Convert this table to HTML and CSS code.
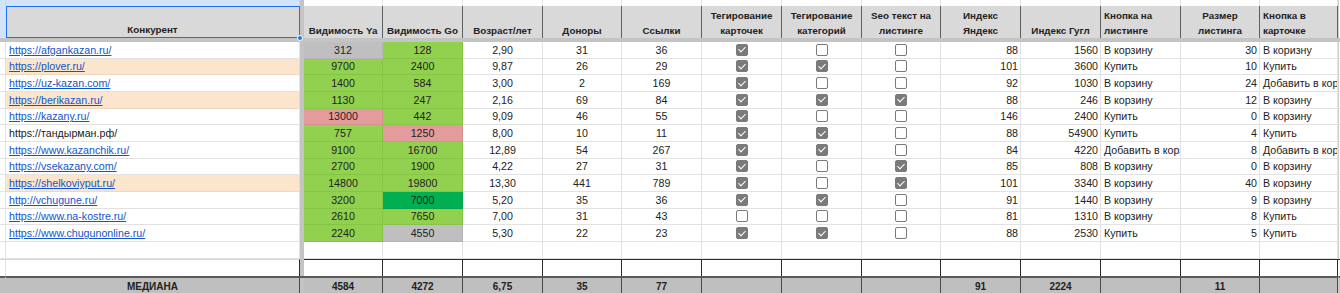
FILE: index.html
```html
<!DOCTYPE html>
<html lang="ru">
<head>
<meta charset="utf-8">
<title>Конкуренты</title>
<link rel="stylesheet" href="styles.css">
</head>
<body>
<div class="sheet">
  <div class="row band">
    <div class="c sel"></div><div class="c sel"></div><div class="gut"></div>
    <div class="c"></div><div class="c"></div><div class="c"></div><div class="c"></div><div class="c"></div><div class="c"></div><div class="c"></div><div class="c"></div><div class="c"></div><div class="c"></div><div class="c"></div><div class="c"></div><div class="c"></div><div class="c end"></div>
  </div>
  <div class="row head">
    <div class="h rhsel"></div>
    <div class="h hc selected">Конкурент<span class="dot"></span></div>
    <div class="gut"></div>
    <div class="h hc">Видимость Ya</div>
    <div class="h hc">Видимость Go</div>
    <div class="h hc">Возраст/лет</div>
    <div class="h hc">Доноры</div>
    <div class="h hc">Ссылки</div>
    <div class="h hc">Тегирование<br>карточек</div>
    <div class="h hc">Тегирование<br>категорий</div>
    <div class="h hc">Seo текст на<br>листинге</div>
    <div class="h hc">Индекс<br>Яндекс</div>
    <div class="h hc">Индекс Гугл</div>
    <div class="h hl">Кнопка на<br>листинге</div>
    <div class="h hc">Размер<br>листинга</div>
    <div class="h hl">Кнопка в<br>карточке</div>
    <div class="h end"></div>
  </div>
  <div class="freeze"></div>

  <div class="row data">
    <div class="c rh"></div><div class="c t"><a href="#">https://afgankazan.ru/</a></div><div class="gut"></div>
    <div class="c n gy">312</div><div class="c n g">128</div><div class="c n">2,90</div><div class="c n">31</div><div class="c n">36</div>
    <div class="c n"><span class="cb on"></span></div><div class="c n"><span class="cb"></span></div><div class="c n"><span class="cb"></span></div>
    <div class="c r">88</div><div class="c r">1560</div><div class="c t">В корзину</div><div class="c r">30</div><div class="c t">В коризну</div><div class="c end"></div>
  </div>
  <div class="row data">
    <div class="c rh"></div><div class="c t pe"><a href="#">https://plover.ru/</a></div><div class="gut"></div>
    <div class="c n g">9700</div><div class="c n g">2400</div><div class="c n">9,87</div><div class="c n">26</div><div class="c n">29</div>
    <div class="c n"><span class="cb on"></span></div><div class="c n"><span class="cb on"></span></div><div class="c n"><span class="cb"></span></div>
    <div class="c r">101</div><div class="c r">3600</div><div class="c t">Купить</div><div class="c r">10</div><div class="c t">Купить</div><div class="c end"></div>
  </div>
  <div class="row data">
    <div class="c rh"></div><div class="c t"><a href="#">https://uz-kazan.com/</a></div><div class="gut"></div>
    <div class="c n g">1400</div><div class="c n g">584</div><div class="c n">3,00</div><div class="c n">2</div><div class="c n">169</div>
    <div class="c n"><span class="cb on"></span></div><div class="c n"><span class="cb"></span></div><div class="c n"><span class="cb"></span></div>
    <div class="c r">92</div><div class="c r">1030</div><div class="c t">В корзину</div><div class="c r">24</div><div class="c t">Добавить в корзину</div><div class="c end"></div>
  </div>
  <div class="row data">
    <div class="c rh"></div><div class="c t pe"><a href="#">https://berikazan.ru/</a></div><div class="gut"></div>
    <div class="c n g">1130</div><div class="c n g">247</div><div class="c n">2,16</div><div class="c n">69</div><div class="c n">84</div>
    <div class="c n"><span class="cb on"></span></div><div class="c n"><span class="cb on"></span></div><div class="c n"><span class="cb on"></span></div>
    <div class="c r">88</div><div class="c r">246</div><div class="c t">В корзину</div><div class="c r">12</div><div class="c t">В корзину</div><div class="c end"></div>
  </div>
  <div class="row data">
    <div class="c rh"></div><div class="c t"><a href="#">https://kazany.ru/</a></div><div class="gut"></div>
    <div class="c n pk">13000</div><div class="c n g">442</div><div class="c n">9,09</div><div class="c n">46</div><div class="c n">55</div>
    <div class="c n"><span class="cb on"></span></div><div class="c n"><span class="cb"></span></div><div class="c n"><span class="cb"></span></div>
    <div class="c r">146</div><div class="c r">2400</div><div class="c t">Купить</div><div class="c r">0</div><div class="c t">В корзину</div><div class="c end"></div>
  </div>
  <div class="row data">
    <div class="c rh"></div><div class="c t">https://тандырман.рф/</div><div class="gut"></div>
    <div class="c n g">757</div><div class="c n pk">1250</div><div class="c n">8,00</div><div class="c n">10</div><div class="c n">11</div>
    <div class="c n"><span class="cb on"></span></div><div class="c n"><span class="cb on"></span></div><div class="c n"><span class="cb"></span></div>
    <div class="c r">88</div><div class="c r">54900</div><div class="c t">Купить</div><div class="c r">4</div><div class="c t">Купить</div><div class="c end"></div>
  </div>
  <div class="row data">
    <div class="c rh"></div><div class="c t"><a href="#">https://www.kazanchik.ru/</a></div><div class="gut"></div>
    <div class="c n g">9100</div><div class="c n g">16700</div><div class="c n">12,89</div><div class="c n">54</div><div class="c n">267</div>
    <div class="c n"><span class="cb on"></span></div><div class="c n"><span class="cb on"></span></div><div class="c n"><span class="cb"></span></div>
    <div class="c r">84</div><div class="c r">4220</div><div class="c t">Добавить в корзину</div><div class="c r">8</div><div class="c t">Добавить в корзину</div><div class="c end"></div>
  </div>
  <div class="row data">
    <div class="c rh"></div><div class="c t"><a href="#">https://vsekazany.com/</a></div><div class="gut"></div>
    <div class="c n g">2700</div><div class="c n g">1900</div><div class="c n">4,22</div><div class="c n">27</div><div class="c n">31</div>
    <div class="c n"><span class="cb on"></span></div><div class="c n"><span class="cb"></span></div><div class="c n"><span class="cb on"></span></div>
    <div class="c r">85</div><div class="c r">808</div><div class="c t">В корзину</div><div class="c r">0</div><div class="c t">В корзину</div><div class="c end"></div>
  </div>
  <div class="row data">
    <div class="c rh"></div><div class="c t pe"><a href="#">https://shelkoviyput.ru/</a></div><div class="gut"></div>
    <div class="c n g">14800</div><div class="c n g">19800</div><div class="c n">13,30</div><div class="c n">441</div><div class="c n">789</div>
    <div class="c n"><span class="cb on"></span></div><div class="c n"><span class="cb"></span></div><div class="c n"><span class="cb on"></span></div>
    <div class="c r">101</div><div class="c r">3340</div><div class="c t">В корзину</div><div class="c r">40</div><div class="c t">В корзину</div><div class="c end"></div>
  </div>
  <div class="row data">
    <div class="c rh"></div><div class="c t"><a href="#">http://vchugune.ru/</a></div><div class="gut"></div>
    <div class="c n g">3200</div><div class="c n dg">7000</div><div class="c n">5,20</div><div class="c n">35</div><div class="c n">36</div>
    <div class="c n"><span class="cb on"></span></div><div class="c n"><span class="cb on"></span></div><div class="c n"><span class="cb"></span></div>
    <div class="c r">91</div><div class="c r">1440</div><div class="c t">В корзину</div><div class="c r">9</div><div class="c t">В корзину</div><div class="c end"></div>
  </div>
  <div class="row data">
    <div class="c rh"></div><div class="c t"><a href="#">https://www.na-kostre.ru/</a></div><div class="gut"></div>
    <div class="c n g">2610</div><div class="c n g">7650</div><div class="c n">7,00</div><div class="c n">31</div><div class="c n">43</div>
    <div class="c n"><span class="cb"></span></div><div class="c n"><span class="cb"></span></div><div class="c n"><span class="cb"></span></div>
    <div class="c r">81</div><div class="c r">1310</div><div class="c t">В корзину</div><div class="c r">8</div><div class="c t">Купить</div><div class="c end"></div>
  </div>
  <div class="row data">
    <div class="c rh"></div><div class="c t"><a href="#">https://www.chugunonline.ru/</a></div><div class="gut"></div>
    <div class="c n g">2240</div><div class="c n gy">4550</div><div class="c n">5,30</div><div class="c n">22</div><div class="c n">23</div>
    <div class="c n"><span class="cb on"></span></div><div class="c n"><span class="cb on"></span></div><div class="c n"><span class="cb"></span></div>
    <div class="c r">88</div><div class="c r">2530</div><div class="c t">Купить</div><div class="c r">5</div><div class="c t">Купить</div><div class="c end"></div>
  </div>

  <div class="row data">
    <div class="c rh"></div><div class="c"></div><div class="gut"></div>
    <div class="c"></div><div class="c"></div><div class="c"></div><div class="c"></div><div class="c"></div><div class="c"></div><div class="c"></div><div class="c"></div><div class="c"></div><div class="c"></div><div class="c"></div><div class="c"></div><div class="c"></div><div class="c end"></div>
  </div>
  <div class="row boxed">
    <div class="c rh"></div><div class="c ba"></div><div class="gut"></div>
    <div class="c"></div><div class="c"></div><div class="c"></div><div class="c"></div><div class="c"></div><div class="c"></div><div class="c"></div><div class="c"></div><div class="c"></div><div class="c"></div><div class="c"></div><div class="c"></div><div class="c"></div><div class="c end"></div>
  </div>
  <div class="row median">
    <div class="m"></div><div class="m">МЕДИАНА</div><div class="gut"></div>
    <div class="m">4584</div><div class="m">4272</div><div class="m">6,75</div><div class="m">35</div><div class="m">77</div><div class="m"></div><div class="m"></div><div class="m"></div><div class="m">91</div><div class="m">2224</div><div class="m"></div><div class="m">11</div><div class="m"></div><div class="m end"></div>
  </div>
</div>
</body>
</html>
```

FILE: styles.css
```css
html, body {
  margin: 0;
  padding: 0;
  background: #fff;
  overflow: hidden;
}

.sheet {
  width: 1340px;
  font-family: "Liberation Sans", Arial, sans-serif;
  font-size: 10.67px;
  color: #222;
}

.row {
  display: grid;
  grid-template-columns: 6px 294px 4px 79px 80px 80px 79px 80px 80px 80px 79px 80px 80px 80px 79px 78px 2px;
}

.c, .h, .m {
  box-sizing: border-box;
  overflow: hidden;
  white-space: nowrap;
}

.c {
  border-right: 1px solid #e2e2e2;
  border-bottom: 1px solid #e2e2e2;
  display: flex;
  align-items: center;
  padding: 0 3px;
}

.gut {
  background: #c4c4c4;
}

/* top band (column-letter strip) */
.band { height: 6px; }
.band .c { border-bottom: none; padding: 0; }
.band .sel { background: #d3e3fd; border-right-color: #c9d7ef; }

/* header row */
.head { height: 32px; }
.h {
  background: #d9d9d9;
  border-right: 1px solid #5f5f5f;
  font-weight: bold;
  font-size: 9.8px;
  line-height: 15px;
  color: #222;
  display: flex;
  align-items: flex-end;
  padding: 0 3px;
}
.hc { justify-content: center; text-align: center; }
.hl { justify-content: flex-start; text-align: left; }
.rhsel { background: #d3e3fd; border-right: 1px solid #c9d7ef; }
.selected {
  position: relative;
  border-right-color: #1a73e8;
  box-shadow: inset 1px 1px 0 #1a73e8, inset 0 -1px 0 #1a73e8;
  overflow: visible;
  padding-bottom: 1px;
}
.dot {
  position: absolute;
  right: -4px;
  bottom: -3px;
  width: 6px;
  height: 6px;
  border-radius: 50%;
  background: #1a73e8;
  border: 1px solid #fff;
  box-sizing: border-box;
  z-index: 2;
}

.head .end, .band .end { background: #fff; border-right: none; }

.freeze {
  height: 4px;
  background: #c4c4c4;
}

/* data rows */
.data { height: 16.667px; }
.data .c { height: 16.667px; }
.rh { padding: 0; }
.t { justify-content: flex-start; }
.n { justify-content: center; }
.r { justify-content: flex-end; padding-right: 2px; }
.end { padding: 0; border-right: none; border-left: 1px solid #cfcfcf; }

a { color: #1155cc; text-decoration: underline; }

.g  { background: #92d050; border-color: #86c445; }
.dg { background: #00b050; border-color: #05a44c; }
.pk { background: #e39b9b; border-color: #d79090; }
.gy { background: #bfbfbf; border-color: #b4b4b4; }
.pe { background: #fce5cd; border-color: #f0d8bf; }

/* checkbox */
.cb {
  position: relative;
  display: block;
  width: 12px;
  height: 12px;
  box-sizing: border-box;
  border: 1.6px solid #7a7a7a;
  border-radius: 2px;
  background: #fff;
}
.cb.on { background: #7a7a7a; }
.cb.on::after {
  content: "";
  position: absolute;
  left: 3px;
  top: 0.5px;
  width: 3px;
  height: 6px;
  border: solid #fff;
  border-width: 0 1.5px 1.5px 0;
  transform: rotate(45deg);
}

/* boxed empty row */
.boxed { height: 17px; }
.boxed .c {
  border-top: 1px solid #2b2b2b;
  border-right-color: #2b2b2b;
  border-bottom: none;
}
.boxed .rh, .boxed .ba { border-top-color: #d5d5d5; }
.boxed .rh { border-right-color: #e2e2e2; }
.boxed .end { border-left: none; }

/* median row */
.median { height: 20px; }
.m {
  background: #bfbfbf;
  border-top: 2px solid #5a5a5a;
  border-right: 1px solid #4a4a4a;
  font-weight: bold;
  font-size: 10px;
  color: #222;
  display: flex;
  align-items: center;
  justify-content: center;
}
.median .gut { border-top: 2px solid #5a5a5a; }
.median .m:first-child { border-right-color: #bfbfbf; }
.median .end { border-right: none; }
```
